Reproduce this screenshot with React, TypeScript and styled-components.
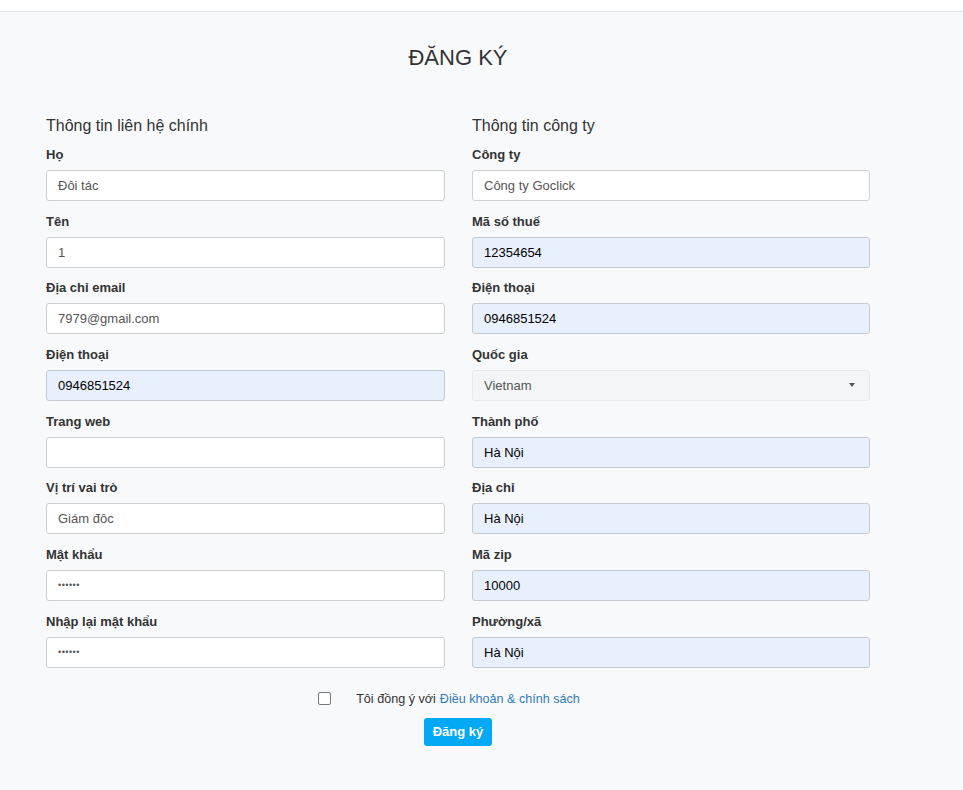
import React from "react";
import styled, { createGlobalStyle } from "styled-components";

const Global = createGlobalStyle`
  html, body { margin: 0; padding: 0; }
  body {
    background: #f8f9fb;
    font-family: "Liberation Sans", Arial, sans-serif;
    color: #333;
  }
  * { box-sizing: border-box; }
`;

const TopBar = styled.div`
  height: 12px;
  background: #fff;
  border-bottom: 1px solid #e3e5e8;
`;

const Page = styled.div`
  width: 824px;
  margin-left: 46px;
  padding-top: 32.6px;
  padding-bottom: 45px;
`;

const Title = styled.h1`
  margin: 0 0 45.7px;
  text-align: center;
  font-size: 22px;
  line-height: 26.4px;
  font-weight: 400;
  color: #333;
`;

const Columns = styled.div`
  display: grid;
  grid-template-columns: 399px 398px;
  column-gap: 27px;
`;

const Column = styled.div`
  display: flex;
  flex-direction: column;
  gap: 11.87px;
`;

const SectionTitle = styled.h3`
  margin: 0;
  font-size: 16px;
  line-height: 17.6px;
  font-weight: 400;
  color: #333;
`;

const Field = styled.div`
  display: flex;
  flex-direction: column;
`;

const Label = styled.label`
  font-size: 13px;
  line-height: 17px;
  font-weight: 700;
  color: #333;
  margin-bottom: 6.8px;
`;

const Input = styled.div<{ $filled?: boolean; $password?: boolean }>`
  height: 31px;
  display: flex;
  align-items: center;
  padding: 0 11px;
  border: 1px solid ${(p) => (p.$filled ? "#c5c9d0" : "#cfcfcf")};
  border-radius: 3px;
  background: ${(p) => (p.$filled ? "#e8f0fe" : "#fff")};
  color: ${(p) => (p.$filled ? "#000" : "#555")};
  font-size: ${(p) => (p.$password ? "9px" : "13px")};
  letter-spacing: ${(p) => (p.$password ? "0.5px" : "0")};
  white-space: nowrap;
`;

const Select = styled.div`
  height: 31px;
  display: flex;
  align-items: center;
  justify-content: space-between;
  padding: 0 11px;
  border: 1px solid #e7e9ec;
  border-radius: 3px;
  background: #f3f5f8;
  color: #555;
  font-size: 13px;
`;

const Caret = styled.span`
  width: 0;
  height: 0;
  border-left: 3.5px solid transparent;
  border-right: 3.5px solid transparent;
  border-top: 4px solid #555;
  margin-right: 3px;
`;

const AgreeRow = styled.div`
  display: flex;
  justify-content: center;
  align-items: center;
  padding-right: 18px;
  margin-top: 22px;
  font-size: 12.6px;
  line-height: 18px;
`;

const Check = styled.span`
  width: 13px;
  height: 13px;
  border: 1px solid #767676;
  border-radius: 2px;
  background: #fff;
  margin-right: 25px;
`;

const Link = styled.a`
  color: #337ab7;
  text-decoration: none;
  margin-left: 4px;
`;

const ButtonRow = styled.div`
  display: flex;
  justify-content: center;
  margin-top: 10px;
`;

const Button = styled.button`
  height: 28px;
  width: 68px;
  border: none;
  border-radius: 3px;
  background: #03a9f4;
  color: #fff;
  font-family: "Liberation Sans", Arial, sans-serif;
  font-size: 13px;
  font-weight: 700;
  padding: 0;
`;

type F = { label: string; value?: string; filled?: boolean; password?: boolean; select?: boolean };

const left: F[] = [
  { label: "Họ", value: "Đôi tác" },
  { label: "Tên", value: "1" },
  { label: "Địa chỉ email", value: "7979@gmail.com" },
  { label: "Điện thoại", value: "0946851524", filled: true },
  { label: "Trang web", value: "" },
  { label: "Vị trí vai trò", value: "Giám đôc" },
  { label: "Mật khẩu", value: "••••••", password: true },
  { label: "Nhập lại mật khẩu", value: "••••••", password: true },
];

const right: F[] = [
  { label: "Công ty", value: "Công ty Goclick" },
  { label: "Mã số thuế", value: "12354654", filled: true },
  { label: "Điện thoại", value: "0946851524", filled: true },
  { label: "Quốc gia", value: "Vietnam", select: true },
  { label: "Thành phố", value: "Hà Nội", filled: true },
  { label: "Địa chỉ", value: "Hà Nội", filled: true },
  { label: "Mã zip", value: "10000", filled: true },
  { label: "Phường/xã", value: "Hà Nội", filled: true },
];

const renderField = (f: F, i: number) => (
  <Field key={i}>
    <Label>{f.label}</Label>
    {f.select ? (
      <Select>
        <span>{f.value}</span>
        <Caret />
      </Select>
    ) : (
      <Input $filled={f.filled} $password={f.password}>
        {f.value}
      </Input>
    )}
  </Field>
);

export default function App() {
  return (
    <>
      <Global />
      <TopBar />
      <Page>
        <Title>ĐĂNG KÝ</Title>
        <Columns>
          <Column>
            <SectionTitle>Thông tin liên hệ chính</SectionTitle>
            {left.map(renderField)}
          </Column>
          <Column>
            <SectionTitle>Thông tin công ty</SectionTitle>
            {right.map(renderField)}
          </Column>
        </Columns>
        <AgreeRow>
          <Check />
          <span>Tôi đồng ý với</span>
          <Link href="#">Điều khoản &amp; chính sách</Link>
        </AgreeRow>
        <ButtonRow>
          <Button>Đăng ký</Button>
        </ButtonRow>
      </Page>
    </>
  );
}
